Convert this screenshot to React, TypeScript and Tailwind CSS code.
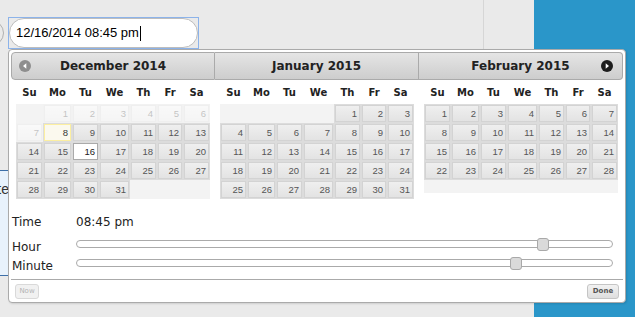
import React from 'react'

type Kind = 'empty' | 'disabled' | 'normal' | 'today' | 'selected'
type Cell = { day?: number; kind: Kind }

const WEEKDAYS = ['Su', 'Mo', 'Tu', 'We', 'Th', 'Fr', 'Sa']
const COLS = 'grid grid-cols-[27px_29px_27px_31px_27px_26px_27px]'

function buildMonth(
  firstWeekday: number,
  length: number,
  opts: { disabledBefore?: number; today?: number; selected?: number } = {},
): Cell[][] {
  const cells: Cell[] = []
  for (let i = 0; i < firstWeekday; i++) cells.push({ kind: 'empty' })
  for (let d = 1; d <= length; d++) {
    let kind: Kind = 'normal'
    if (opts.disabledBefore && d < opts.disabledBefore) kind = 'disabled'
    if (d === opts.today) kind = 'today'
    if (d === opts.selected) kind = 'selected'
    cells.push({ day: d, kind })
  }
  while (cells.length < 35) cells.push({ kind: 'empty' })
  const rows: Cell[][] = []
  for (let i = 0; i < cells.length; i += 7) rows.push(cells.slice(i, i + 7))
  return rows
}

const months = [
  {
    title: 'December 2014',
    rows: buildMonth(1, 31, { disabledBefore: 8, today: 8, selected: 16 }),
    place: 'first',
  },
  { title: 'January 2015', rows: buildMonth(4, 31), place: 'middle' },
  { title: 'February 2015', rows: buildMonth(0, 28), place: 'last' },
]

function PrevIcon() {
  return (
    <svg width="12" height="12" viewBox="0 0 12 12">
      <circle cx="6" cy="6" r="6" fill="#8e8e8e" />
      <path d="M7.3 3.2 L4 6 L7.3 8.8 Z" fill="#fff" />
    </svg>
  )
}

function NextIcon() {
  return (
    <svg width="12" height="12" viewBox="0 0 12 12">
      <circle cx="6" cy="6" r="6" fill="#1e1e1e" />
      <path d="M4.7 3.2 L8 6 L4.7 8.8 Z" fill="#fff" />
    </svg>
  )
}

function DayCell({ cell }: { cell: Cell }) {
  if (cell.kind === 'empty') {
    return <div className="h-full bg-[#dcdcdc] opacity-35" />
  }
  let inner =
    'border-[#d3d3d3] bg-linear-to-b from-[#efefef] to-[#e3e3e3] text-[#555]'
  if (cell.kind === 'today') inner = 'border-[#fcefa1] bg-[#fbf9ee] text-[#363636]'
  if (cell.kind === 'selected') inner = 'border-[#aaaaaa] bg-white text-[#212121]'
  return (
    <div
      className={`h-full bg-[#dcdcdc] p-[1px] ${cell.kind === 'disabled' ? 'opacity-35' : ''}`}
    >
      <div
        className={`h-full border pr-[2px] text-right font-['Liberation_Sans',Arial,sans-serif] text-[9.5px] leading-[15px] ${inner}`}
      >
        {cell.day}
      </div>
    </div>
  )
}

function Month({ month }: { month: (typeof months)[number] }) {
  const headerShape =
    month.place === 'first'
      ? 'rounded-l-[4px] border'
      : month.place === 'last'
        ? 'rounded-r-[4px] border-y border-r'
        : 'border-y border-r'
  return (
    <div>
      <div
        className={`relative h-[28px] border-[#aaaaaa] bg-linear-to-b from-[#e5e5e5] to-[#cdcdcd] ${headerShape}`}
      >
        {month.place === 'first' ? (
          <span className="absolute top-[7px] left-[7px] flex">
            <PrevIcon />
          </span>
        ) : null}
        {month.place === 'last' ? (
          <span className="absolute top-[7px] right-[9px] flex">
            <NextIcon />
          </span>
        ) : null}
        <div className="text-center text-[12px] leading-[26px] font-bold text-[#222]">
          {month.title}
        </div>
      </div>
      <div className="px-[5px]">
        <div className={`${COLS} h-[24px] items-center text-center text-[10px] font-bold text-[#222]`}>
          {WEEKDAYS.map((d) => (
            <div key={d}>{d}</div>
          ))}
        </div>
        {month.rows.map((row, i) => {
          const blank = row.every((c) => c.kind === 'empty')
          return (
            <div key={i} className={`${COLS} ${blank ? 'h-[13px]' : 'h-[19px]'}`}>
              {row.map((cell, j) => (
                <DayCell key={j} cell={cell} />
              ))}
            </div>
          )
        })}
      </div>
    </div>
  )
}

function Slider({ handleLeft }: { handleLeft: string }) {
  return (
    <div className="relative mr-[10px] h-[8px] flex-1 rounded-full border border-[#aaaaaa] bg-white">
      <div
        className={`absolute top-[-3px] h-[13px] w-[12px] rounded-[3px] border border-[#a9a9a9] bg-[#dadada] ${handleLeft}`}
      />
    </div>
  )
}

function TimePanel() {
  return (
    <div className="text-[12px] text-[#222]">
      <div className="mt-[14px] flex h-[18px] items-center">
        <div className="w-[65px] pl-[1px]">Time</div>
        <div>08:45 pm</div>
      </div>
      <div className="mt-[9px] flex h-[14px] items-start">
        <div className="w-[65px] pl-[1px] leading-[14px]">Hour</div>
        <Slider handleLeft="left-[460px]" />
      </div>
      <div className="mt-[5px] flex h-[14px] items-start">
        <div className="w-[65px] pl-[1px] leading-[14px]">Minute</div>
        <Slider handleLeft="left-[433px]" />
      </div>
    </div>
  )
}

function ButtonPane() {
  return (
    <div className="mt-[6px] flex items-start justify-between border-t border-[#aaaaaa] px-[4px] pt-[4px] pb-[1px]">
      <button
        disabled
        className="h-[15px] w-[24px] rounded-[3px] border border-[#d9d9d9] bg-[#f1f1f1] text-[7px] leading-[13px] text-[#b3b3b3]"
      >
        Now
      </button>
      <button className="h-[15px] w-[32px] rounded-[3px] border border-[#c5c5c5] bg-linear-to-b from-[#f2f2f2] to-[#dedede] text-[7px] leading-[13px] font-bold text-[#555]">
        Done
      </button>
    </div>
  )
}

export default function App() {
  return (
    <div className="relative flex h-[317px] w-[635px] overflow-hidden bg-[#eaeaea] font-['DejaVu_Sans',Verdana,sans-serif]">
      <div className="w-[534px]">
        <div className="h-[290px] w-[484px] border-r border-[#d6d6d6]">
          <div className="flex items-center pt-[17px]">
            <div className="h-[26px] w-[4px] overflow-hidden">
              <div className="-ml-[22px] h-[26px] w-[26px] rounded-full border border-[#b0b0b0]" />
            </div>
            <div className="ml-[4px] h-[32px] w-[191px] border border-[#8cb3ea]">
              <div className="flex h-full items-center rounded-[15px] border border-[#bdbdbd] bg-white px-[6px] font-['Liberation_Sans',Arial,sans-serif] text-[13px] text-black">
                12/16/2014 08:45 pm
                <span className="ml-[1px] h-[15px] w-[1px] bg-black" />
              </div>
            </div>
          </div>
          <div className="mt-[121px] h-[106px] border-y border-[#3d6fa8] bg-[#e8f2fc] pt-[8px]">
            <div className="flex w-[9px] justify-end font-['Liberation_Sans',Arial,sans-serif] text-[14px] whitespace-nowrap text-[#333]">
              Date
            </div>
          </div>
        </div>
      </div>
      <div className="flex-1 bg-[#2a96c9]" />

      <div className="absolute top-[49px] left-[8px] w-[618px] rounded-[4px] border border-[#aaaaaa] bg-white p-[2px] shadow-[1px_1px_2px_rgba(0,0,0,0.12)]">
        <div className="grid h-[147px] grid-cols-3">
          {months.map((m) => (
            <Month key={m.title} month={m} />
          ))}
        </div>
        <TimePanel />
        <ButtonPane />
      </div>
    </div>
  )
}
